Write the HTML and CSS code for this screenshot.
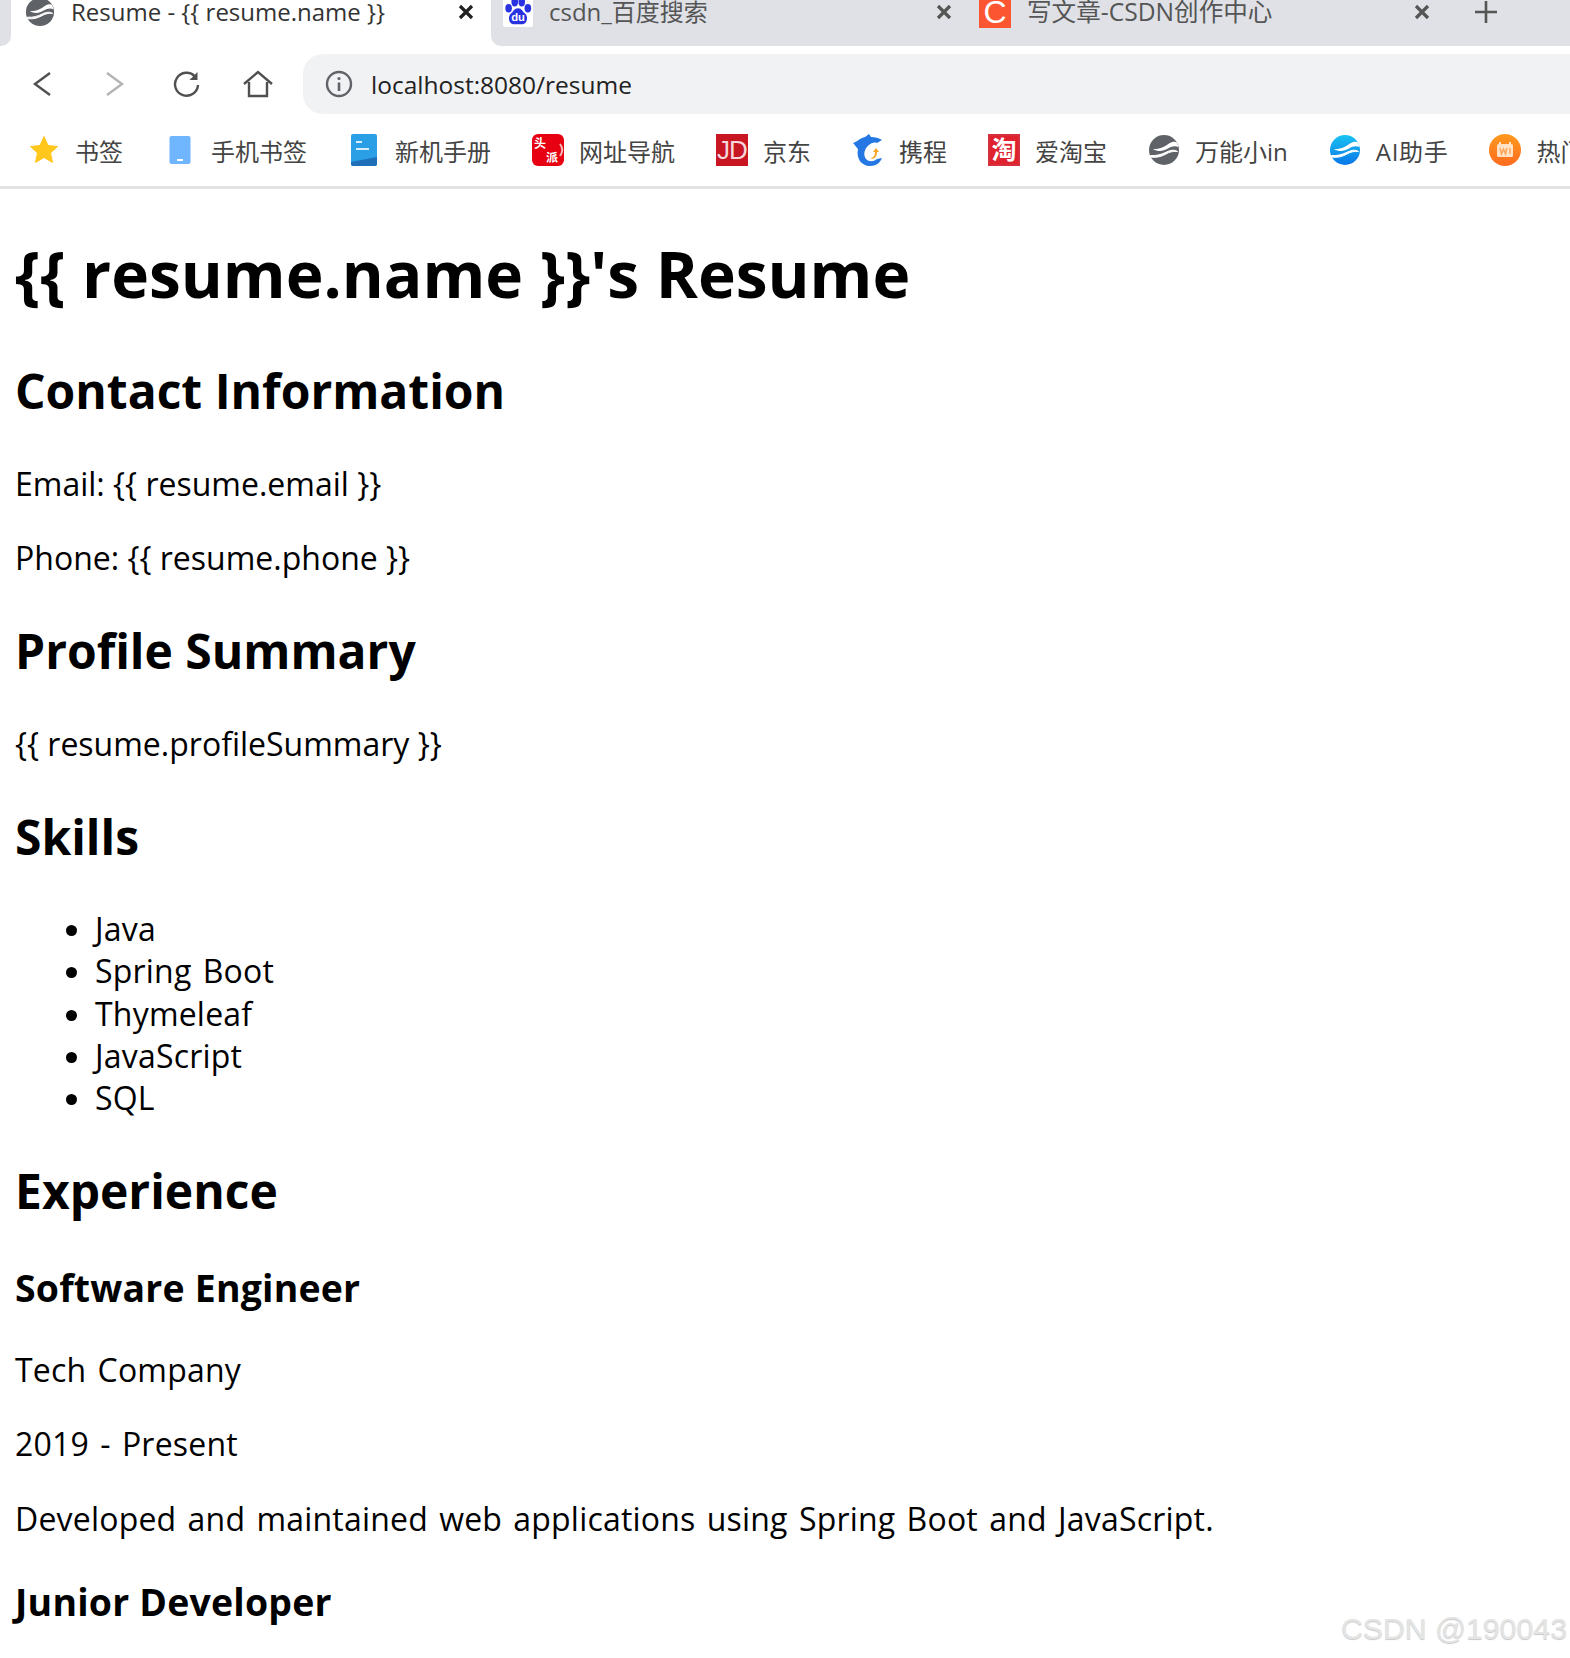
FILE: index.html
```html
<!DOCTYPE html>
<html lang="en">
<head>
    <meta charset="UTF-8">
    <meta name="viewport" content="width=device-width, initial-scale=1.0">
    <title>Resume - {{ resume.name }}</title>
    <link rel="stylesheet" href="styles.css">
</head>
<body>
    <header class="browser">
        <div class="tab-strip">
            <div class="tab-corner"></div>
            <div class="tab tab-active">
                <svg class="tab-icon" viewBox="0 0 32 32">
                    <circle cx="16" cy="16" r="15" fill="#5f6368"/>
                    <path d="M5 15c7 .5 12-2.500 16-5.500 3-2 6-2.500 8-1l1.500 4.500c-4-1.500-7-.5-10.500 1.500-5 3-10 3.500-15 .5z" fill="#fff"/>
                    <path d="M2.500 23c6 1 11-.5 15.500-3 3.500-2 7-3 11.500-2.500-3-2-7-1.500-11 .5-5 2.500-10 4-16 3.500z" fill="#fff" stroke="#fff"/>
                </svg>
                <span class="tab-title">Resume - {{ resume.name }}</span>
                <svg class="tab-close" viewBox="0 0 16 16">
                    <path d="M2 2l12 12M14 2 2 14" stroke="#222" stroke-width="3.200"/>
                </svg>
            </div>
            <div class="tab-rest">
                <div class="tab tab-second">
                    <svg class="tab-icon" viewBox="0 0 32 32">
                        <rect width="32" height="32" rx="3" fill="#fff"/>
                        <ellipse cx="6" cy="12" rx="3.500" ry="4.500" fill="#2932e1"/>
                        <ellipse cx="12.500" cy="5" rx="3.500" ry="5" fill="#2932e1"/>
                        <ellipse cx="20" cy="5" rx="3.500" ry="5" fill="#2932e1"/>
                        <ellipse cx="26.500" cy="12" rx="3.500" ry="4.500" fill="#2932e1"/>
                        <path d="M16 12c-4 0-5 4-8 6-3 3-2 11 4 11h8c6 0 7-8 4-11-3-2-4-6-8-6z" fill="#2932e1"/>
                        <text x="16" y="26" class="paw-text">du</text>
                    </svg>
                    <span class="tab-title">csdn_百度搜索</span>
                    <svg class="tab-close" viewBox="0 0 16 16">
                        <path d="M2 2l12 12M14 2 2 14" stroke="#555" stroke-width="3.200"/>
                    </svg>
                </div>
                <div class="tab tab-third">
                    <div class="tab-icon csdn-icon">C</div>
                    <span class="tab-title">写文章-CSDN创作中心</span>
                    <svg class="tab-close" viewBox="0 0 16 16">
                        <path d="M2 2l12 12M14 2 2 14" stroke="#555" stroke-width="3.200"/>
                    </svg>
                </div>
                <svg class="tab-new" viewBox="0 0 24 24">
                    <path d="M12 1v22M1 12h22" stroke="#555" stroke-width="2.600" fill="none"/>
                </svg>
            </div>
        </div>

        <div class="toolbar">
            <svg class="nav-icon" viewBox="0 0 28 28">
                <path d="M22 3 7 14l15 11" stroke="#505050" stroke-width="2.400" fill="none"/>
            </svg>
            <svg class="nav-icon nav-forward" viewBox="0 0 28 28">
                <path d="M6 3l15 11L6 25" stroke="#b4b4b4" stroke-width="2.400" fill="none"/>
            </svg>
            <svg class="nav-icon nav-reload" viewBox="0 0 28 28">
                <path d="M23 6.500A11.500 11.500 0 1 0 26 15" stroke="#505050" stroke-width="2.400" fill="none"/>
                <path d="M25.500 2v8h-8z" fill="#505050"/>
            </svg>
            <svg class="nav-icon nav-home" viewBox="0 0 32 28">
                <path d="M2 14 16 2l14 12M7 12v14h18V12" stroke="#505050" stroke-width="2.400" fill="none"/>
            </svg>
            <div class="address-bar">
                <svg class="info-icon" viewBox="0 0 28 28">
                    <circle cx="14" cy="14" r="12" stroke="#5f6368" stroke-width="2.400" fill="none"/>
                    <path d="M14 12.500V21" stroke="#5f6368" stroke-width="2.600"/>
                    <circle cx="14" cy="8.500" r="1.600" fill="#5f6368"/>
                </svg>
                <span class="address-text">localhost:8080/resume</span>
            </div>
        </div>

        <nav class="bookmarks">
            <a class="bookmark">
                <svg class="bm-icon" viewBox="0 0 32 32">
                    <path d="M16 2.500l4 9 9.500 1-7 6.500 2 9.500-8.500-5-8.500 5 2-9.500-7-6.500 9.500-1z" fill="#ffc61c" stroke="#ffc61c" stroke-linejoin="round"/>
                </svg>
                书签
            </a>
            <a class="bookmark">
                <svg class="bm-icon" viewBox="0 0 32 32">
                    <rect x="5.500" y="2" width="21" height="28" rx="2" fill="#6fb6ff"/>
                    <rect x="13" y="25" width="6" height="2" fill="#fff"/>
                </svg>
                手机书签
            </a>
            <a class="bookmark">
                <svg class="bm-icon" viewBox="0 0 32 32">
                    <rect x="3" y="0" width="26" height="32" rx="2" fill="#2a9fe6"/>
                    <path d="M3 30V28L29 23v7a2 2 0 0 1-2 2H5a2 2 0 0 1-2-2z" fill="#1f6fb8"/>
                    <path d="M8 8h6M8 15h13" stroke="#d7eefc" stroke-width="2"/>
                </svg>
                新机手册
            </a>
            <a class="bookmark">
                <svg class="bm-icon" viewBox="0 0 32 32">
                    <rect width="32" height="32" rx="6" fill="#e60012"/>
                    <path d="M28 10c3 4 3 8 0 12" stroke="#f5b8bc" stroke-width="2" fill="none"/>
                    <text x="2" y="14" class="hao-text">头</text>
                    <text x="14" y="28" class="hao-text">派</text>
                </svg>
                网址导航
            </a>
            <a class="bookmark">
                <div class="bm-icon jd-icon">JD</div>
                京东
            </a>
            <a class="bookmark">
                <svg class="bm-icon" viewBox="0 0 32 32">
                    <path d="M1 9c4-1 7-5 12-6l4-3 2 3c4 0 8 1 11 3l-5 3c-3-1-6 0-8 2-5 4-6 10-3 14 3 3 7 3 11 0l5-1c-2 5-6 8-12 8-9 0-14-8-12-17-2-2-3-4-5-6z" fill="#2577e3"/>
                    <path d="M18 24c3 0 5-2 5-6h-2l3-4 3 4h-2c0 5-3 8-7 6z" fill="#f5a623"/>
                </svg>
                携程
            </a>
            <a class="bookmark">
                <div class="bm-icon taobao-icon">淘</div>
                爱淘宝
            </a>
            <a class="bookmark">
                <svg class="bm-icon" viewBox="0 0 32 32">
                    <circle cx="16" cy="16" r="15" fill="#5f6368"/>
                    <path d="M5 15c7 .5 12-2.500 16-5.500 3-2 6-2.500 8-1l1.500 4.500c-4-1.500-7-.5-10.500 1.500-5 3-10 3.500-15 .5z" fill="#fff"/>
                    <path d="M2.500 23c6 1 11-.5 15.500-3 3.500-2 7-3 11.500-2.500-3-2-7-1.500-11 .5-5 2.500-10 4-16 3.500z" fill="#fff" stroke="#fff"/>
                </svg>
                万能小in
            </a>
            <a class="bookmark bookmark-ai">
                <svg class="bm-icon" viewBox="0 0 32 32">
                    <defs>
                        <linearGradient id="aiBlue" x1="0" y1="0" x2="0" y2="1">
                            <stop offset="0" stop-color="#19c3f2"/>
                            <stop offset="1" stop-color="#0a76e8"/>
                        </linearGradient>
                    </defs>
                    <circle cx="16" cy="16" r="15" fill="url(#aiBlue)"/>
                    <path d="M5 15c7 .5 12-2.500 16-5.500 3-2 6-2.500 8-1l1.500 4.500c-4-1.500-7-.5-10.500 1.500-5 3-10 3.500-15 .5z" fill="#fff"/>
                    <path d="M2.500 23c6 1 11-.5 15.500-3 3.500-2 7-3 11.500-2.500-3-2-7-1.500-11 .5-5 2.500-10 4-16 3.500z" fill="#fff" stroke="#fff"/>
                </svg>
                AI助手
            </a>
            <a class="bookmark">
                <svg class="bm-icon" viewBox="0 0 32 32">
                    <defs>
                        <linearGradient id="hotOrange" x1="0" y1="0" x2="0" y2="1">
                            <stop offset="0" stop-color="#ff9a1f"/>
                            <stop offset="1" stop-color="#ff6a1f"/>
                        </linearGradient>
                    </defs>
                    <circle cx="16" cy="16" r="16" fill="url(#hotOrange)"/>
                    <rect x="8" y="10" width="16" height="13" rx="1.500" fill="#ffe3c4"/>
                    <path d="M11 8v3M21 8v3" stroke="#ffe3c4" stroke-width="2"/>
                    <path d="M11 14l1.500 6 2-5 2 5 1.500-6M21 14v6" stroke="#ffa45c" stroke-width="1.400" fill="none"/>
                </svg>
                热门
            </a>
        </nav>
    </header>

    <main class="resume">
        <h1>{{ resume.name }}'s Resume</h1>

        <h2>Contact Information</h2>
        <p>Email: {{ resume.email }}</p>
        <p>Phone: {{ resume.phone }}</p>

        <h2>Profile Summary</h2>
        <p>{{ resume.profileSummary }}</p>

        <h2>Skills</h2>
        <ul class="plain">
            <li>Java</li>
            <li>Spring Boot</li>
            <li>Thymeleaf</li>
            <li>JavaScript</li>
            <li>SQL</li>
        </ul>

        <h2>Experience</h2>
        <h3>Software Engineer</h3>
        <p class="plain">Tech Company</p>
        <p class="plain">2019 - Present</p>
        <p class="plain">Developed and maintained web applications using Spring Boot and JavaScript.</p>

        <h3>Junior Developer</h3>
    </main>

    <div class="watermark">CSDN @190043</div>
</body>
</html>
```

FILE: styles.css
```css
html, body {
    height: 100%;
}

body {
    position: relative;
    margin: 0;
    height: 1658px;
    overflow: hidden;
    background: #fff;
    color: #000;
    font-family: "Open Sans", "Noto Sans CJK SC", sans-serif;
}

/* Browser chrome */
.browser {
    border-bottom: 3px solid #e2e3e5;
}

.tab-strip {
    display: flex;
    height: 46px;
    overflow: hidden;
    background: #fff;
}

.tab-corner {
    width: 11px;
    background: #dfe1e6;
    border-bottom-right-radius: 10px;
}

.tab-rest {
    flex: 1;
    display: flex;
    align-items: flex-start;
    background: #dfe1e6;
    border-bottom-left-radius: 10px;
}

.tab {
    display: flex;
    align-items: center;
    gap: 16px;
    box-sizing: border-box;
    width: 478px;
    height: 24px;
    padding: 0 17px 0 12px;
    color: #555;
    font-size: 24px;
    line-height: 24px;
}

.tab-active {
    width: 480px;
    padding-left: 14px;
    color: #333;
}

.tab-third {
    padding-left: 10px;
    font-size: 24.6px;
}

.tab-icon {
    flex: none;
    width: 30px;
    height: 30px;
}

.tab-title {
    white-space: nowrap;
}

.tab-close {
    flex: none;
    width: 16px;
    height: 16px;
    margin-left: auto;
}

.tab-new {
    flex: none;
    width: 24px;
    height: 24px;
    margin-left: 27px;
}

.csdn-icon {
    height: 32px;
    width: 32px;
    background: #fc5531;
    color: #fff;
    font-family: "Liberation Sans", sans-serif;
    font-size: 32px;
    line-height: 32px;
    text-align: center;
}

.paw-text {
    fill: #fff;
    font-family: "Liberation Sans", sans-serif;
    font-size: 12px;
    font-weight: bold;
    text-anchor: middle;
}

.toolbar {
    display: flex;
    align-items: center;
    height: 60px;
    margin-top: 8px;
    padding-left: 28px;
}

.nav-icon {
    flex: none;
    width: 28px;
    height: 28px;
}

.nav-forward {
    margin-left: 45px;
}

.nav-reload {
    margin-left: 43px;
}

.nav-home {
    width: 32px;
    margin-left: 42px;
}

.address-bar {
    flex: 1;
    display: flex;
    align-items: center;
    gap: 18px;
    height: 60px;
    margin-left: 29px;
    padding-left: 22px;
    background: #f1f2f4;
    border-radius: 20px 0 0 20px;
}

.info-icon {
    width: 28px;
    height: 28px;
}

.address-text {
    color: #222;
    font-size: 24.5px;
}

.bookmarks {
    display: flex;
    align-items: center;
    gap: 41px;
    height: 72px;
    padding-left: 28px;
    overflow: hidden;
}

.bookmark {
    flex: none;
    display: flex;
    align-items: center;
    gap: 15px;
    color: #444;
    font-size: 24px;
}

.bookmark-ai {
    letter-spacing: .7px;
}

.bm-icon {
    flex: none;
    width: 32px;
    height: 32px;
}

.hao-text {
    fill: #fff;
    font-family: "Noto Sans CJK SC", sans-serif;
    font-size: 12px;
    font-weight: bold;
}

.jd-icon {
    background: #c91623;
    color: #f6d8da;
    font-family: "Liberation Sans", sans-serif;
    font-size: 26px;
    letter-spacing: -1px;
    line-height: 32px;
    text-align: center;
}

.taobao-icon {
    box-sizing: border-box;
    border: 2px solid #d5303c;
    background: #e0212e;
    color: #fff;
    font-size: 25px;
    font-weight: bold;
    line-height: 27px;
    text-align: center;
}

/* Page content */
.resume {
    margin: 0 15px;
    font-size: 32px;
    line-height: 1.32;
}

.resume h1 {
    font-size: 64px;
    margin: 43px 0;
}

.resume h2 {
    font-size: 48px;
    margin: 40px 0;
}

.resume h3 {
    font-size: 37.44px;
    letter-spacing: .2px;
    margin: 37px 0;
}

.resume p {
    margin: 32px 0;
}

.resume ul {
    margin: 32px 0;
    padding-left: 80px;
}

.plain {
    letter-spacing: .2px;
    word-spacing: 2.7px;
}

.watermark {
    position: absolute;
    right: 3px;
    bottom: 12px;
    color: #e4e4e4;
    font-family: "Liberation Sans", sans-serif;
    font-size: 30.3px;
    text-shadow: 0 1px 1px #c8c8c8;
}
```
